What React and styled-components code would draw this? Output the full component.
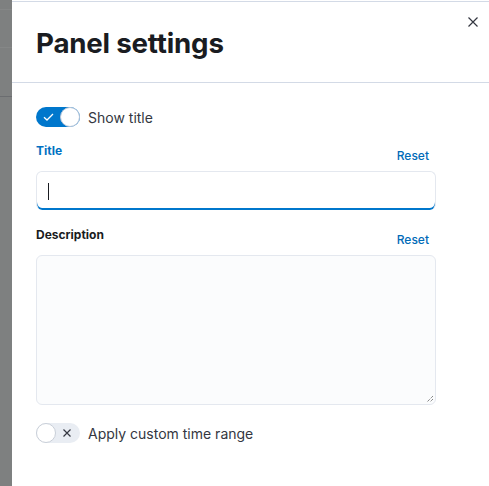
import React from "react"
import styled, { createGlobalStyle } from "styled-components"

const GlobalStyle = createGlobalStyle`
  html, body {
    margin: 0;
    padding: 0;
    background: #fff;
    font-family: Inter, "Noto Sans", sans-serif;
    -webkit-font-smoothing: antialiased;
  }
  * { box-sizing: border-box; }
`

const Page = styled.div`
  display: flex;
  height: 486px;
  width: 489px;
  overflow: hidden;
`

const Backdrop = styled.div`
  width: 12px;
  flex: none;
  display: flex;
  flex-direction: column;
  background: #7e8080;
`

const BackdropLine = styled.div`
  height: ${p => p.h}px;
  flex: none;
  border-bottom: 1px solid ${p => p.c};
`

const Flyout = styled.div`
  flex: 1;
  display: flex;
  flex-direction: column;
  background: #fff;
  padding-top: 1px;
`

const Header = styled.div`
  border-top: 1px solid #d3dae6;
  border-bottom: 1px solid #d3dae6;
  height: 82px;
  padding: 0 24px;
  display: flex;
  align-items: center;
  position: relative;
`

const Title = styled.h2`
  margin: 0;
  font-size: 27.7px;
  font-weight: 700;
  color: #1a1c21;
  letter-spacing: -0.2px;
  padding-top: 1px;
`

const CloseButton = styled.button`
  position: absolute;
  top: 11px;
  right: 7px;
  width: 18px;
  height: 18px;
  padding: 0;
  border: none;
  background: transparent;
  display: flex;
  align-items: center;
  justify-content: center;
  color: #343741;
`

const Body = styled.div`
  padding: 23px 24px;
  width: 448px;
  display: flex;
  flex-direction: column;
`

const SwitchRow = styled.label`
  display: flex;
  align-items: center;
  gap: 8px;
  font-size: 14px;
  color: #343741;
  height: 22px;
`

const Track = styled.span`
  position: relative;
  width: 44px;
  height: 20px;
  border-radius: 10px;
  background: ${p => (p.on ? "#0077cc" : "#e9edf3")};
  flex: none;
`

const Knob = styled.span`
  position: absolute;
  top: 0;
  ${p => (p.on ? "right: 0;" : "left: 0;")}
  width: 20px;
  height: 20px;
  border-radius: 50%;
  background: #fff;
  border: 1px solid ${p => (p.on ? "#b8c6d9" : "#c9cfd8")};
`

const TrackIcon = styled.svg`
  position: absolute;
  top: 5px;
  ${p => (p.on ? "left: 7px;" : "left: 26px;")}
`

const FormRow = styled.div`
  display: flex;
  flex-direction: column;
  margin-top: ${p => p.mt}px;
`

const LabelRow = styled.div`
  display: flex;
  justify-content: space-between;
  align-items: flex-end;
  margin-bottom: 12px;
`

const Label = styled.span`
  font-size: 12px;
  font-weight: 700;
  line-height: 16px;
  color: ${p => (p.active ? "#0071c2" : "#1a1c21")};
  align-self: flex-start;
`

const Reset = styled.button`
  font-family: inherit;
  font-size: 12px;
  font-weight: 500;
  color: #006bb8;
  background: none;
  border: none;
  padding: 0;
  margin-right: 7px;
  line-height: 16px;
  transform: translateY(5px);
`

const Input = styled.div`
  height: 39px;
  border: 1px solid #e4e8ef;
  border-bottom: none;
  border-radius: 6px;
  background: #fff;
  box-shadow: inset 0 -2px 0 #0077cc;
  display: flex;
  align-items: center;
  padding-left: 11px;
`

const Caret = styled.span`
  width: 1px;
  height: 17px;
  background: #1a1c21;
`

const TextArea = styled.div`
  position: relative;
  height: 150px;
  border: 1px solid #e4e8ef;
  border-radius: 6px;
  background: #fbfcfd;
`

const Grip = styled.svg`
  position: absolute;
  right: 1px;
  bottom: 1px;
`

const Toggle = ({ on, children }) => (
  <SwitchRow>
    <Track on={on}>
      {on ? (
        <TrackIcon on width="11" height="10" viewBox="0 0 11 10">
          <path d="M1 5.2 L4 8 L10 2" fill="none" stroke="#fff" strokeWidth="1.3" />
        </TrackIcon>
      ) : (
        <TrackIcon width="10" height="10" viewBox="0 0 10 10">
          <path d="M1.5 1.5 L8.5 8.5 M8.5 1.5 L1.5 8.5" fill="none" stroke="#343741" strokeWidth="1.2" />
        </TrackIcon>
      )}
      <Knob on={on} />
    </Track>
    {children}
  </SwitchRow>
)

const App = () => (
  <Page>
    <GlobalStyle />
    <Backdrop>
      <BackdropLine h={10} c="#858787" />
      <BackdropLine h={38} c="#858787" />
      <BackdropLine h={49} c="#6b6d70" />
    </Backdrop>
    <Flyout>
      <Header>
        <Title>Panel settings</Title>
        <CloseButton aria-label="Close">
          <svg width="12" height="12" viewBox="0 0 12 12">
            <path d="M1.5 1.5 L10.5 10.5 M10.5 1.5 L1.5 10.5" stroke="#343741" strokeWidth="1.2" fill="none" />
          </svg>
        </CloseButton>
      </Header>
      <Body>
        <Toggle on>Show title</Toggle>
        <FormRow mt={15}>
          <LabelRow>
            <Label active>Title</Label>
            <Reset>Reset</Reset>
          </LabelRow>
          <Input>
            <Caret />
          </Input>
        </FormRow>
        <FormRow mt={17}>
          <LabelRow>
            <Label>Description</Label>
            <Reset>Reset</Reset>
          </LabelRow>
          <TextArea>
            <Grip width="9" height="9" viewBox="0 0 9 9">
              <path d="M8 2 L2 8 M8 5 L5 8" stroke="#555" strokeWidth="1" strokeDasharray="1 1" fill="none" />
            </Grip>
          </TextArea>
        </FormRow>
        <FormRow mt={17}>
          <Toggle>Apply custom time range</Toggle>
        </FormRow>
      </Body>
    </Flyout>
  </Page>
)

export default App
